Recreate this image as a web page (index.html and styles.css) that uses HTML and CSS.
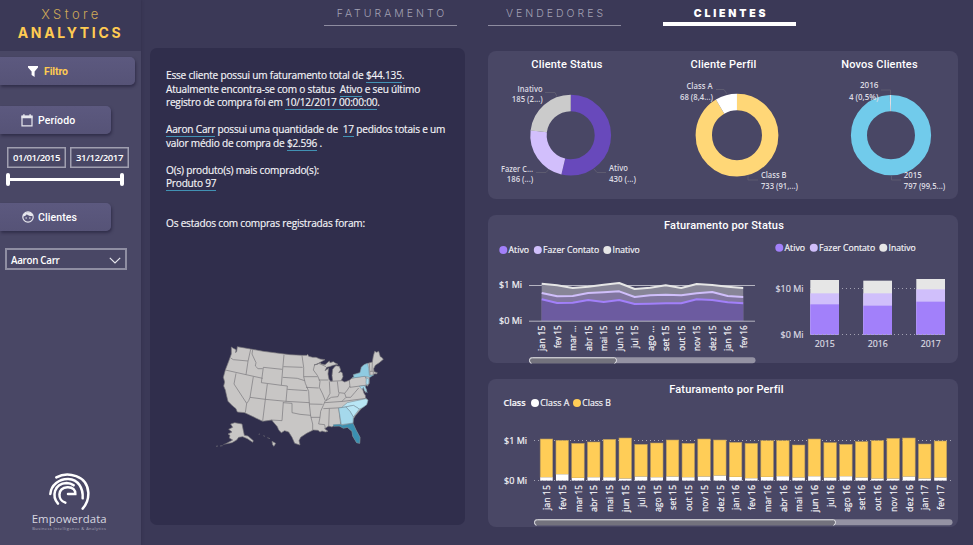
FILE: index.html
```html
<!DOCTYPE html>
<html lang="pt-BR">
<head>
<meta charset="utf-8">
<title>XStore Analytics</title>
<link rel="stylesheet" href="styles.css">
</head>
<body>
<div class="app">
  <aside class="sidebar">
    <header class="brand">
      <div class="brand-top">XStore</div>
      <div class="brand-main">ANALYTICS</div>
    </header>
    <div class="tag tag-filter">
      <svg width="10" height="11" viewBox="0 0 10 11"><path d="M0 0h10v1.6L6.6 5.6V11L3.6 9V5.6L0 1.6z" fill="#fff"/></svg>
      <span>Filtro</span>
    </div>
    <div class="tag tag-period">
      <svg width="12" height="13" viewBox="0 0 12 13"><path d="M1 2.2h10v9.6H1z" fill="none" stroke="#e8e8ee" stroke-width="1.2"/><path d="M.5 1.7h11v2.6H.5zM2.2.2h1.4v2H2.2zM8.4.2h1.4v2H8.4z" fill="#e8e8ee"/></svg>
      <span>Período</span>
    </div>
    <div class="dates"><span>01/01/2015</span><span>31/12/2017</span></div>
    <div class="slider"><i></i><i></i></div>
    <div class="tag tag-clients">
      <svg width="12" height="12" viewBox="0 0 12 12"><circle cx="6" cy="6" r="5.2" fill="none" stroke="#e8e8ee" stroke-width="1.2"/><path d="M.8 5.6C3 5.4 4.2 4.4 4.8 3.2 6.2 4.8 8.6 5.3 11.2 4.8A5.4 5.4 0 0 0 .8 5.6z" fill="#e8e8ee"/><circle cx="4.1" cy="7" r=".75" fill="#e8e8ee"/><circle cx="7.9" cy="7" r=".75" fill="#e8e8ee"/></svg>
      <span>Clientes</span>
    </div>
    <div class="select"><span>Aaron Carr</span>
      <svg width="12" height="7" viewBox="0 0 12 7"><path d="M.8.8L6 6 11.200.8" fill="none" stroke="#e6e6ec" stroke-width="1.2"/></svg>
    </div>
    <svg class="logo" width="141" height="75" viewBox="0 90 423 225">
      <g fill="none" stroke="#fff" stroke-width="7.500" stroke-linecap="round">
        <path d="M169 112C202 94 262 105 265 158C266 180 258 195 248 206"/>
        <path d="M151 162C153 135 178 116 205 117C235 118 250 145 248 175"/>
        <path d="M174 191C155 170 161 131 200 129C209 129 216 132 221 136"/>
        <path d="M196 188C172 180 171 145 202 142C219 141 227 151 226 162H204"/>
      </g>
      <text x="95" y="248" textLength="225" class="logo-name">Empowerdata</text>
      <text x="97" y="271" textLength="221" class="logo-sub">Business Intelligence &amp; Analytics</text>
    </svg>
  </aside>

  <main class="main">
    <nav class="tabs">
      <a class="tab tab-a">FATURAMENTO</a>
      <a class="tab tab-b">VENDEDORES</a>
      <a class="tab tab-c active">CLIENTES</a>
    </nav>
    <div class="content">
      <section class="summary">
        <div class="text">
          <p class="l1">Esse cliente possui um faturamento total de <u>$44.135</u>.</p>
          <p class="l2">Atualmente encontra-se com o status &nbsp;<u>Ativo</u> e seu último</p>
          <p class="l3">registro de compra foi em <u>10/12/2017 00:00:00</u>.</p>
          <p class="l4 gap"><u>Aaron Carr</u> possui uma quantidade de &nbsp;<u>17</u> pedidos totais e um</p>
          <p class="l5">valor médio de compra de <u>$2.596</u> .</p>
          <p class="l6 gap">O(s) produto(s) mais comprado(s):</p>
          <p class="l7"><u>Produto 97</u></p>
          <p class="l8 gap2">Os estados com compras registradas foram:</p>
        </div>
        <svg class="map" width="185" height="125" viewBox="0 0 555 375">
          <g fill="#c8c6c5" stroke="#77757a" stroke-width="2" stroke-linejoin="round">
            <path d="M64 39L70 43L78 47L77 56L80 52L82 38L122 45L160 52L200 57L240 62L276 64L290 64L293 61L296 67L308 70L318 70L330 75L345 77L334 83L326 88L312 93L322 91L330 86L334 90L345 92L352 86L358 81L360 86L370 83L376 87L384 91L370 94L358 98L350 100L345 110L356 103L354 120L357 136L362 142L368 140L366 125L368 106L374 98L378 95L388 97L392 108L386 116L393 113L397 117L399 128L394 139L404 144L418 139L426 132L432 128L430 122L450 116L452 110L454 100L462 92L474 88L487 84L490 66L494 52L500 55L506 52L511 68L515 70L520 76L508 86L496 94L491 104L492 113L502 116L500 120L494 119L490 123L480 127L478 135L478 148L472 157L468 152L466 160L470 168L467 176L462 168L460 156L458 166L462 178L466 184L467 192L474 198L470 212L456 222L446 233L436 245L430 255L429 268L438 288L450 310L449 328L440 326L428 306L426 292L412 280L400 282L388 276L370 276L366 279L356 276L344 284L354 292L346 294L336 291L330 294L324 289L310 288L290 298L272 310L267 320L270 333L254 328L246 310L236 294L224 290L214 296L206 288L202 278L188 262L186 258L158 262L104 236L82 234L78 224L68 216L54 202L50 186L46 168L41 156L44 144L40 130L46 108L56 82L64 60Z"/>
            <path d="M62 270L74 266L96 270L100 290L103 304L114 306L130 320L128 325L112 314L98 308L86 310L80 318L66 326L46 330L68 318L58 312L60 304L54 300L66 294L56 286L68 280Z"/>
            <path d="M18 337l6-1M30 336l8-1M40 332l5-2M146 301l4-1M160 305l5 2M172 311l8 3M186 322L197 328L192 337L188 333Z"/>
          </g>
          <g fill="none" stroke="#77757a" stroke-width="2" stroke-linejoin="round">
            <path d="M62 72L70 77L114 81M122 46L114 82L108 122M46 108L108 122L158 133M128 48L126 60L138 86L136 96L144 104L158 104M217 106L160 100L154 146L214 154L218 106M78 118L72 150L110 208L116 200L120 190M130 128L120 190L166 196L228 202M172 150L166 196L158 261M110 208L106 236M214 154L232 156L228 202M220 204L216 260L184 258M222 62L218 106M220 98L278 100M218 130L262 133L284 140M232 166L292 170M228 202L298 206M220 206L246 208L246 236L270 241L302 244M276 65L281 100L281 128L322 128M281 128L286 148L296 172L298 210L338 211M288 160L326 162M298 210L302 246L308 270L308 289M303 250L330 250L326 270L344 272L346 284"/>
            <path d="M314 92L310 108L322 124L330 142L328 160L338 180L346 200L340 214L332 232L330 250M326 138L355 138M326 88L348 98M358 142L360 178L348 200M382 142L386 176M362 142L396 140M348 200L364 190L384 188L388 176L404 178L412 168L420 156M418 139L420 160L466 154M426 132L464 126L470 136M344 206L400 202L468 193M340 224L398 221M358 224L356 278M386 222L392 270M404 178L408 190L422 190L434 176L446 162M408 190L396 202M478 88L480 124M487 84L486 112M480 112L494 112M490 114V124"/>
          </g>
          <g stroke="#6d8794" stroke-width="1.500" stroke-linejoin="round">
            <path fill="#8fcbe1" d="M426 132L432 128L430 122L450 116L454 100L462 92L473 88L476 104L478 124L491 123L480 130L464 127Z"/>
            <path fill="#a9dcee" d="M469 131L477 136L476 148L470 154L468 146ZM448 157L464 155L468 164L472 176L464 170L460 160L456 166Z"/>
            <path fill="#b9e6f5" d="M394 221L412 206L468 194L474 199L470 212L456 222L448 225L430 214L408 218Z"/>
            <path fill="#b9e6f5" d="M408 219L430 214L448 225L430 249L420 232Z"/>
            <path fill="#a5d9ec" d="M386 222L408 219L420 232L430 249L429 267L394 272Z"/>
            <path fill="#3b90b1" d="M370 272L392 271L396 274L429 268L438 288L450 310L449 328L440 326L428 306L426 292L412 280L400 283L388 276L371 277Z"/>
          </g>
        </svg>
      </section>

      <div class="charts">
        <section class="panel donuts">
          <div class="donut"><h2>Cliente Status</h2><svg id="status" viewBox="488 75 158 123"></svg></div>
          <div class="donut"><h2>Cliente Perfil</h2><svg id="profile" viewBox="646 75 155 123"></svg></div>
          <div class="donut"><h2>Novos Clientes</h2><svg id="new" viewBox="801 75 157 123"></svg></div>
        </section>
        <section class="panel"><h2>Faturamento por Status</h2><svg id="byStatus" viewBox="488 239 470 124"></svg></section>
        <section class="panel"><h2 class="shift">Faturamento por Perfil</h2><svg id="byProfile" viewBox="488 403 470 124"></svg></section>
      </div>
    </div>
  </main>
</div>
<script src="charts.js"></script>
</body>
</html>
```
FILE: styles.css
```css
* { box-sizing: border-box; margin: 0; padding: 0; }
body { width: 973px; height: 545px; overflow: hidden; background: #3b3957; color: #fff; font-family: "Open Sans", "Noto Sans", sans-serif; }
svg { display: block; flex: none; }
.app { display: grid; grid-template-columns: 141px 1fr; height: 545px; }

.sidebar { background: #494765; display: flex; flex-direction: column; align-items: flex-start; box-shadow: 1px 0 2px #35334f; }
.brand { width: 141px; height: 51px; background: #3b3957; color: #ffcb52; text-align: center; font-family: Inter, sans-serif; white-space: nowrap; padding-top: 6px; }
.brand-top { height: 18px; line-height: 17px; font-size: 13px; font-weight: 300; letter-spacing: 3.4px; padding-left: 2px; color: #d0aa57; }
.brand-main { height: 18px; line-height: 18px; font-size: 14px; font-weight: 700; letter-spacing: 2.7px; }
.tag { display: flex; align-items: center; height: 28px; background: linear-gradient(#5c597f, #565377); border-radius: 0 5px 5px 0; box-shadow: 1px 2px 3px rgba(35, 32, 60, .65); font: 500 10.5px Roboto, sans-serif; letter-spacing: .1px; }
.tag-filter { width: 135px; margin-top: 6px; padding-left: 28px; gap: 6px; color: #ffcb52; font-weight: 700; letter-spacing: -.1px; }
.tag-period { width: 111px; margin-top: 21px; padding-left: 21px; gap: 5px; }
.tag-clients { width: 111px; margin-top: 17px; padding-left: 22px; gap: 4px; }
.dates { display: flex; gap: 4px; margin: 13px 0 0 7px; }
.dates span { width: 59px; height: 21px; border: 1px solid #a09fb0; box-shadow: inset 0 0 0 .5px #a09fb0; font-size: 9.6px; line-height: 19px; text-align: center; letter-spacing: -.45px; font-weight: 600; }
.slider { width: 118px; height: 13px; margin: 5px 0 0 6px; display: flex; justify-content: space-between; background: linear-gradient(#fff, #fff) center / 100% 3px no-repeat; }
.slider i { width: 4px; height: 13px; border-radius: 2px; background: #fff; }
.select { width: 122px; height: 22px; margin: 17px 0 0 5px; border: 2px solid #8f8ea2; padding: 2px 4px 0 4px; display: flex; align-items: center; justify-content: space-between; font-size: 9.8px; letter-spacing: -.3px; font-weight: 600; }
.logo { margin-top: auto; margin-bottom: 0; }
.logo-name { font: 400 34px "Open Sans", sans-serif; fill: #d8d7e0; }
.logo-sub { font: 12px "Open Sans", sans-serif; fill: #a9a8ba; }

.main { display: flex; flex-direction: column; }
.tabs { height: 48px; display: flex; align-items: flex-start; padding-left: 183px; gap: 31px; }
.tab { width: 133px; height: 26px; border-bottom: 1px solid #8e8ca0; text-align: center; font: 300 10.5px/28px Inter, sans-serif; letter-spacing: 3px; padding-left: 3px; color: #a3a1b4; white-space: nowrap; }
.tab.active { margin-left: 11px; border-bottom: 4px solid #fff; color: #fff; font-weight: 900; letter-spacing: 2.8px; }
.content { display: flex; padding-left: 9px; gap: 23px; }
.summary { width: 315px; height: 477px; border-radius: 7px; background: #302e4c; padding: 21px 0 0 16px; }
.text p { height: 13.5px; font-size: 10.1px; line-height: 13.5px; white-space: nowrap; color: #f5f5f8; font-weight: 500; letter-spacing: -.21px; -webkit-text-stroke: .15px #f5f5f8; }
.text u { text-decoration: none; border-bottom: 1.5px solid #4292b4; }
.text .gap { margin-top: 13.5px; }
.text .gap2 { margin-top: 26px; }
.map { margin: 104px 0 0 44px; }

.charts { display: flex; flex-direction: column; gap: 16px; padding-top: 3px; width: 470px; }
.panel { height: 148px; border-radius: 8px; background: #494765; }
.panel svg { width: 100%; overflow: visible; }
.panel h2 { height: 24px; font: 500 11px/21px Roboto, sans-serif; letter-spacing: .18px; text-align: center; white-space: nowrap; padding-left: 2px; }
.panel h2.shift { padding-left: 7px; }
.donuts { display: grid; grid-template-columns: 158px 155px 157px; }
.donuts h2 { padding: 3px 0 0; }
text { font-family: "Open Sans", "Noto Sans", sans-serif; }
.chart-label { font-size: 8.5px; font-weight: 600; fill: #dcdbe2; }
.axis { font-size: 9.5px; font-weight: 500; fill: #f5f5f8; stroke: #f5f5f8; stroke-width: .2px; }
.axis.soft { fill: #dddce3; stroke: #dddce3; }
.axis.bold { font-weight: 600; }
```
FILE: charts.js
```
const NS = "http://www.w3.org/2000/svg";
function add(id, tag, attrs, text) {
  const el = document.createElementNS(NS, tag);
  for (const k in attrs) el.setAttribute(k, attrs[k]);
  if (text) el.textContent = text;
  document.getElementById(id).appendChild(el);
}
function label(id, x, y, width, text, cls) {
  add(id, "text", { x, y, textLength: width, lengthAdjust: "spacingAndGlyphs", class: cls }, text);
}
function donut(id, cx, cy, outer, inner, parts) {
  let start = 0;
  for (const [share, color] of parts) {
    add(id, "circle", {
      cx, cy, r: (outer + inner) / 2, fill: "none", stroke: color, "stroke-width": outer - inner,
      pathLength: 100, "stroke-dasharray": share + " " + (100 - share),
      transform: `rotate(${start * 3.6 - 90} ${cx} ${cy})`
    });
    start += share;
  }
}
function leader(id, d) { add(id, "path", { d, fill: "none", stroke: "#5d5b70", "stroke-width": 1 }); }
function dotted(id, x1, x2, y) {
  add(id, "path", { d: `M${x1} ${y}H${x2}`, stroke: "#a3a2b3", "stroke-width": 1, "stroke-dasharray": "1 3" });
}
function vertical(id, x, y, text, width) {
  add(id, "text", { transform: `translate(${x} ${y}) rotate(-90)`, "text-anchor": "end", textLength: width, lengthAdjust: "spacingAndGlyphs", class: "axis" }, text);
}
function rect(id, x, y, width, height, fill, extra) { add(id, "rect", { x, y, width, height, fill, ...extra }); }
function legend(id, cy, items) {
  for (const [cx, color, width, name] of items) {
    add(id, "circle", { cx, cy, r: 4, fill: color });
    label(id, cx + 5.3, cy + 3.4, width, name, "axis");
  }
}
function scrollbar(id, x, y, width, thumb) {
  rect(id, x, y, width, 6, "#9492a3", { rx: 3 });
  rect(id, x, y, thumb, 6, "#73727d", { rx: 2 });
  add(id, "path", { d: `M${x + 2} ${y + 6}Q${x} ${y + 6} ${x} ${y + 3}T${x + 3} ${y + .5}H${x + thumb - 2}Q${x + thumb} ${y + .5} ${x + thumb} ${y + 3}T${x + thumb - 2} ${y + 6}`, fill: "none", stroke: "#e8e8ec", "stroke-width": 1 });
}

donut("status", 570.7, 135.2, 40.4, 24, [[53.7, "#6849bb"], [23.2, "#d2bffc"], [23.1, "#cbcbcb"]]);
leader("status", "M545 92.500H555L557 96.500M536 172.500H546L549 169M594 169L597 172.500H606");
label("status", 517.5, 91.5, 25, "Inativo", "chart-label");
label("status", 511.8, 102, 31, "185 (2...)", "chart-label");
label("status", 501, 171.5, 32, "Fazer C...", "chart-label");
label("status", 506.8, 182, 26.5, "186 (...)", "chart-label");
label("status", 609, 170.500, 19, "Ativo", "chart-label");
label("status", 609, 182, 27, "430 (...)", "chart-label");

donut("profile", 737, 135.2, 41.4, 25, [[91.5, "#ffd777"], [8.5, "#fff"]]);
leader("profile", "M716 89.500H724L727 94M748 175V180H758");
label("profile", 686.5, 88.500, 26, "Class A", "chart-label");
label("profile", 680, 100.200, 33, "68 (8,4...)", "chart-label");
label("profile", 761, 178.200, 25.500, "Class B", "chart-label");
label("profile", 761, 189, 37, "733 (91,...)", "chart-label");

donut("new", 891, 135.2, 40.1, 24, [[99.5, "#71cbeb"], [0.5, "#e4e4ea"]]);
leader("new", "M881 90H890.500V95M891.500 176V180H901");
label("new", 860, 88.200, 18.500, "2016", "chart-label");
label("new", 849, 100.200, 29.500, "4 (0,5%)", "chart-label");
label("new", 903.800, 178.200, 18, "2015", "chart-label");
label("new", 903.800, 189, 41.500, "797 (99,5...)", "chart-label");

const months = ["jan", "fev", "mar", "abr", "mai", "jun", "jul", "ago", "set", "out", "nov", "dez"];
const statusItems = x => [[x, "#a280fa", 20.5, "Ativo"], [x + 34.5, "#d0bffb", 56, "Fazer Contato"], [x + 104, "#e6e6e6", 27, "Inativo"]];
legend("byStatus", 250, statusItems(503.300));
legend("byStatus", 247.800, statusItems(779.300));
label("byStatus", 499, 288, 23, "$1 Mi", "axis");
label("byStatus", 499, 324, 23, "$0 Mi", "axis");
add("byStatus", "path", { d: "M529 285.500H755", stroke: "#b5b4c1", "stroke-width": 1 });
const series = [
  [[221, 226, 234, 230, 224, 219, 237, 233, 226, 234, 222, 225, 230, 234], "#e6e6e6"],
  [[249, 259, 258, 249, 247, 244, 261, 256, 254, 256, 250, 246, 258, 261], "#d0bffb"],
  [[268, 279, 278, 270, 276, 270, 282, 281, 280, 280, 268, 270, 277, 280], "#a280fa"]
];
const areas = ["#878597", "#8176a0", "#6c5ba0"];
series.forEach(([values], n) => {
  const line = values.map((v, i) => `${541.7 + i * 15.5} ${210 + v / 3}`).join("L");
  add("byStatus", "path", { d: `M541.700 321L${line}V321Z`, fill: areas[n] });
});
series.forEach(([values, color]) => {
  const line = values.map((v, i) => `${541.7 + i * 15.5} ${210 + v / 3}`).join("L");
  add("byStatus", "path", { d: "M" + line, fill: "none", stroke: color, "stroke-width": 2, "stroke-linejoin": "round" });
});
add("byStatus", "path", { d: "M529 321.200H755", stroke: "#b5b4c1", "stroke-width": 1 });
for (let i = 0; i < 14; i++) {
  const m = months[i % 12];
  const short = i === 2 || i === 7;
  vertical("byStatus", 545.2 + i * 15.5, 325.5, short ? m + " ..." : m + (i < 12 ? " 15" : " 16"), /fev|jul/.test(m) ? 22.5 : 25.5);
}
scrollbar("byStatus", 529.500, 357.300, 226, 87);

label("byStatus", 775.500, 292, 28, "$10 Mi", "axis soft");
label("byStatus", 780.500, 338, 23, "$0 Mi", "axis soft");
dotted("byStatus", 810, 945, 288.500);
[[810.3, 210, 250, 283, 2015], [863.3, 212, 250, 287, 2016], [916.3, 207, 238, 275, 2017]].forEach(([x, a, b, c, year]) => {
  const y = v => 210 + v / 3;
  rect("byStatus", x, y(a), 28.700, (374 - a) / 3, "#e6e6e6");
  rect("byStatus", x, y(b), 28.700, (374 - b) / 3, "#d0bffb");
  rect("byStatus", x, y(c), 28.700, (374 - c) / 3, "#a280fa");
  label("byStatus", x + 4.5, 347, 20, String(year), "axis soft");
});
dotted("byStatus", 810, 945, 334.500);

label("byProfile", 503.500, 406, 22, "Class", "axis bold");
legend("byProfile", 403, [[535, "#fff", 29, "Class A"], [577, "#ffcd57", 28.500, "Class B"]]);
label("byProfile", 504, 444, 23, "$1 Mi", "axis");
label("byProfile", 504, 484, 23, "$0 Mi", "axis");
dotted("byProfile", 534, 952, 440.500);
const tops = [192, 196, 205, 201, 193, 189, 208, 204, 195, 205, 192, 195, 202, 205, 197, 197, 210, 192, 203, 208, 200, 197, 190, 189, 207, 198];
const whites = [307, 298, 309, 307, 307, 311, 305, 307, 305, 307, 305, 302, 306, 310, 306, 304, 308, 304, 308, 304, 308, 311, 311, 305, 311, 308];
tops.forEach((top, i) => {
  const x = 540.2 + i * 15.76;
  rect("byProfile", x, 375 + top / 3, 12.5, (whites[i] - top) / 3, "#ffcd57", { stroke: "#b79a5c", "stroke-width": .6 });
  rect("byProfile", x, 375 + whites[i] / 3, 12.5, (317 - whites[i]) / 3, "#fff");
  const m = months[i % 12];
  const widths = { fev: 25, jul: 22, jan: 25, set: 25, out: 26 };
  vertical("byProfile", x + 10, 485, m + " " + (15 + Math.floor(i / 12)), widths[m] || 27);
});
dotted("byProfile", 534, 952, 480.500);
scrollbar("byProfile", 534.500, 519.300, 418, 301);
```
